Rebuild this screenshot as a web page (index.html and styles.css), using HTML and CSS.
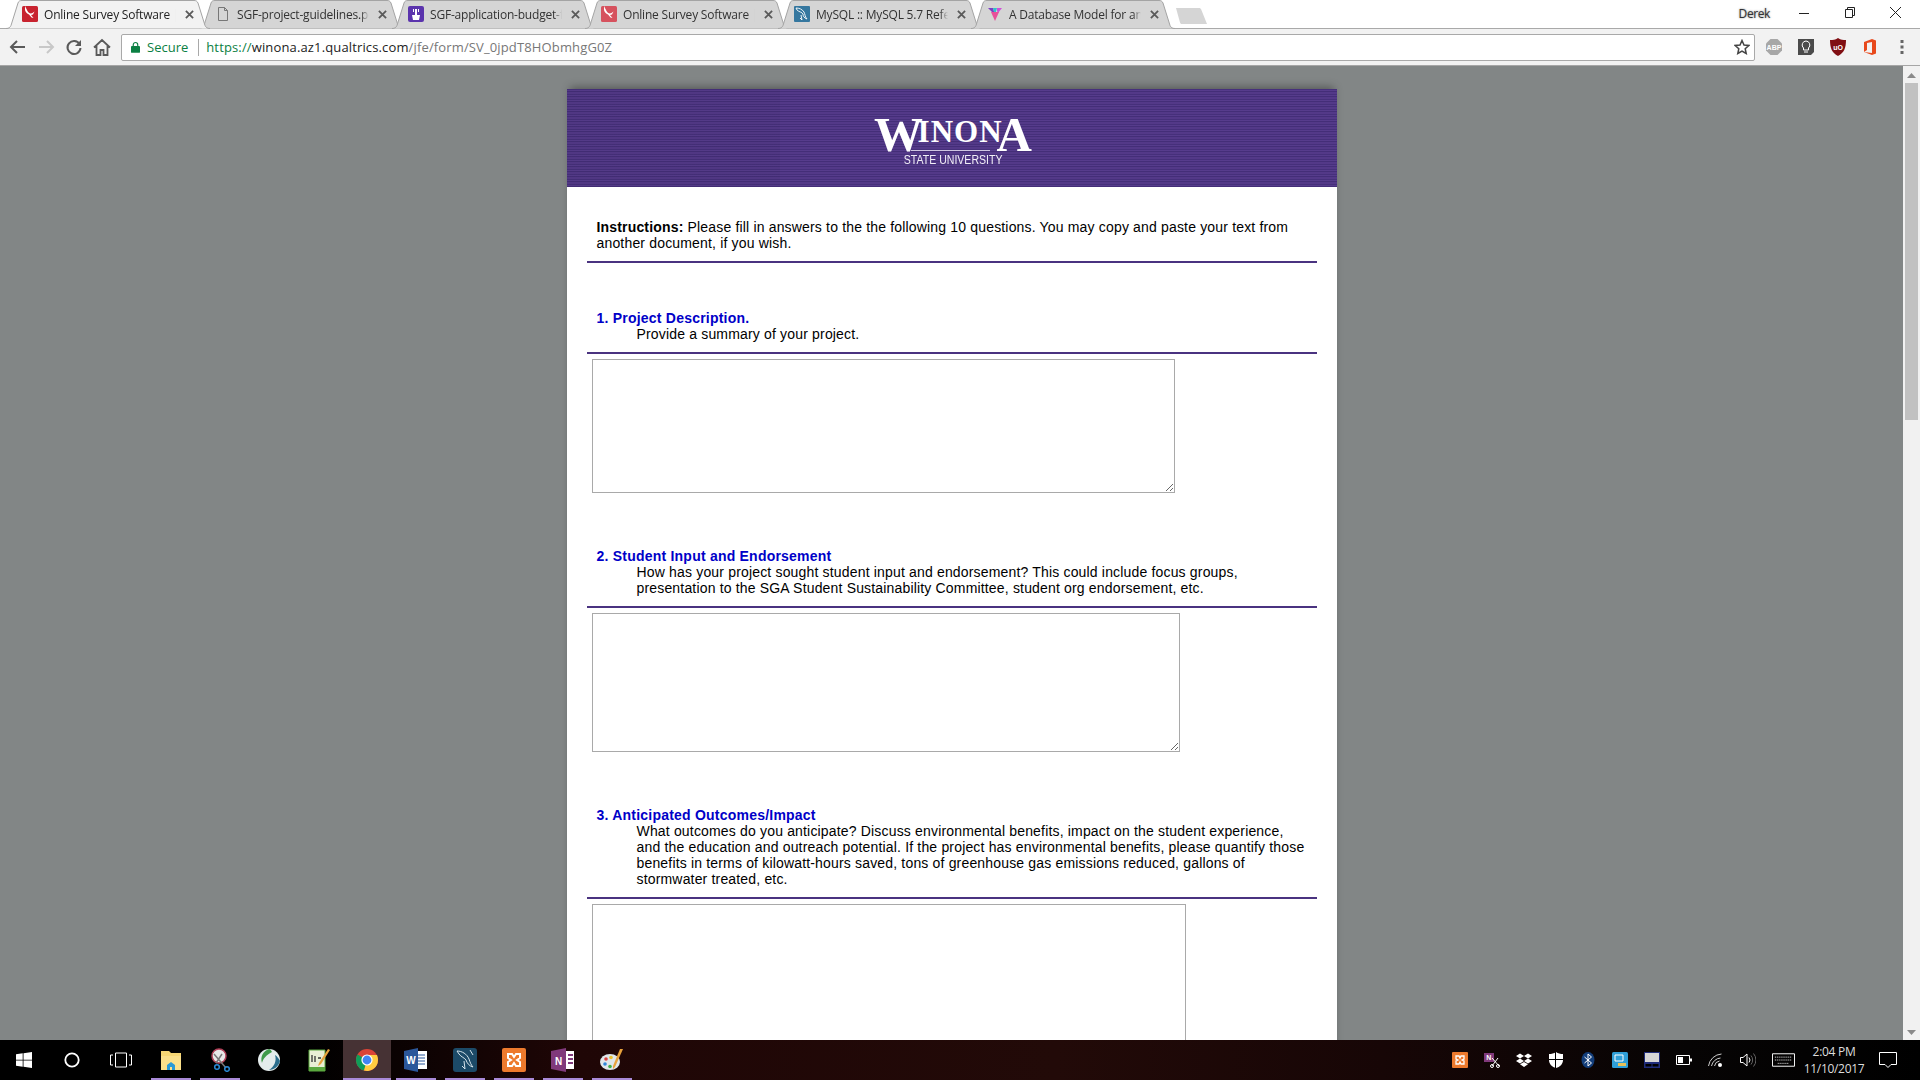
FILE: index.html
```html
<!DOCTYPE html>
<html lang="en">
<head>
<meta charset="utf-8">
<title>Online Survey Software</title>
<link rel="stylesheet" href="styles.css">
</head>
<body>
<div class="app">
  <header class="tabstrip">
    <div class="tabs">
      <div class="tab tab-active">
        <svg class="tab-shape" viewBox="0 0 204 28" preserveAspectRatio="none"><path d="M0 28C3 28 4 27 5 25L12 3C12.6 1 14 .5 16 .5L188 .5C190 .5 191 1 192 3L199 25C200 27 201 28 204 28"/></svg>
        <svg class="fav" viewBox="0 0 16 16"><rect width="16" height="16" rx="1.5" fill="#c8232f"/><path d="M3 0l2.500 5c1 2 3 3 5 2l2-1.500-1.500 3-2 .5 2.500 3-2-.5-2.500-3C5 8 3.500 6 3 4z" fill="#fff"/></svg>
        <span class="tab-title">Online Survey Software |</span>
        <svg class="tab-x" viewBox="0 0 10 10"><path d="M1 1l8 8M9 1l-8 8"/></svg>
      </div>
      <div class="tab">
        <svg class="tab-shape" viewBox="0 0 204 28" preserveAspectRatio="none"><path d="M0 28C3 28 4 27 5 25L12 3C12.6 1 14 .5 16 .5L188 .5C190 .5 191 1 192 3L199 25C200 27 201 28 204 28"/></svg>
        <svg class="fav" viewBox="0 0 16 16"><path d="M3.500 1.500h6l3 3v10h-9zM9.500 1.500v3h3" fill="none" stroke="#777"/></svg>
        <span class="tab-title">SGF-project-guidelines.pdf</span>
        <svg class="tab-x" viewBox="0 0 10 10"><path d="M1 1l8 8M9 1l-8 8"/></svg>
      </div>
      <div class="tab">
        <svg class="tab-shape" viewBox="0 0 204 28" preserveAspectRatio="none"><path d="M0 28C3 28 4 27 5 25L12 3C12.6 1 14 .5 16 .5L188 .5C190 .5 191 1 192 3L199 25C200 27 201 28 204 28"/></svg>
        <svg class="fav" viewBox="0 0 16 16"><rect width="16" height="16" rx="2" fill="#5b34ad"/><path d="M4 9h8l-1 5H5zM7 3h2v6H7zM5 3h1v3H5zM10 3h1v3h-1z" fill="#fff"/></svg>
        <span class="tab-title">SGF-application-budget-form</span>
        <svg class="tab-x" viewBox="0 0 10 10"><path d="M1 1l8 8M9 1l-8 8"/></svg>
      </div>
      <div class="tab">
        <svg class="tab-shape" viewBox="0 0 204 28" preserveAspectRatio="none"><path d="M0 28C3 28 4 27 5 25L12 3C12.6 1 14 .5 16 .5L188 .5C190 .5 191 1 192 3L199 25C200 27 201 28 204 28"/></svg>
        <svg class="fav" viewBox="0 0 16 16"><rect width="16" height="16" rx="1.5" fill="#d6525e"/><path d="M3 0l2.500 5c1 2 3 3 5 2l2-1.500-1.500 3-2 .5 2.500 3-2-.5-2.500-3C5 8 3.500 6 3 4z" fill="#fff"/></svg>
        <span class="tab-title">Online Survey Software |</span>
        <svg class="tab-x" viewBox="0 0 10 10"><path d="M1 1l8 8M9 1l-8 8"/></svg>
      </div>
      <div class="tab">
        <svg class="tab-shape" viewBox="0 0 204 28" preserveAspectRatio="none"><path d="M0 28C3 28 4 27 5 25L12 3C12.6 1 14 .5 16 .5L188 .5C190 .5 191 1 192 3L199 25C200 27 201 28 204 28"/></svg>
        <svg class="fav" viewBox="0 0 16 16"><rect width="16" height="16" rx="1" fill="#35779f"/><path d="M2 2c3 0 6 1 8 4 1 2 1 5 3 7-3-1-4-3-4-5C8 6 5 6 3 4zM7 9l1 5-2-2" fill="none" stroke="#fff" stroke-width=".9"/></svg>
        <span class="tab-title">MySQL :: MySQL 5.7 Reference</span>
        <svg class="tab-x" viewBox="0 0 10 10"><path d="M1 1l8 8M9 1l-8 8"/></svg>
      </div>
      <div class="tab">
        <svg class="tab-shape" viewBox="0 0 204 28" preserveAspectRatio="none"><path d="M0 28C3 28 4 27 5 25L12 3C12.6 1 14 .5 16 .5L188 .5C190 .5 191 1 192 3L199 25C200 27 201 28 204 28"/></svg>
        <svg class="fav" viewBox="0 0 16 16"><path d="M1 2h5l2 7z" fill="#7a3fc4"/><path d="M6 2h4L8 9z" fill="#2fc2c8"/><path d="M10 2h5l-4 5-1-2z" fill="#d04fd8"/><path d="M4 6h8l-4 9z" fill="#e84f9a"/></svg>
        <span class="tab-title">A Database Model for an Online</span>
        <svg class="tab-x" viewBox="0 0 10 10"><path d="M1 1l8 8M9 1l-8 8"/></svg>
      </div>
      <svg class="newtab" viewBox="0 0 33 18"><path d="M1 1h23c1 0 1.500 .5 2 1l6 15H7c-1 0-1.500-.5-2-1.500z"/></svg>
    </div>
    <div class="winctl">
      <span class="user">Derek</span>
      <svg class="win-btn" viewBox="0 0 46 14"><path d="M18 7.500h10" stroke="#222" fill="none"/></svg>
      <svg class="win-btn" viewBox="0 0 46 14"><path d="M18.500 3.500h7v8h-7zM20.500 3.500v-2h7v8h-2" stroke="#222" fill="none"/></svg>
      <svg class="win-btn" viewBox="0 0 46 14"><path d="M17 1l11 11M28 1L17 12" stroke="#222" fill="none"/></svg>
    </div>
  </header>

  <nav class="toolbar">
    <svg class="nav-btn" viewBox="0 0 28 20"><path d="M21 10H8M13 4l-6 6 6 6" class="ic-dark"/></svg>
    <svg class="nav-btn" viewBox="0 0 28 20"><path d="M7 10h13M15 4l6 6-6 6" class="ic-light"/></svg>
    <svg class="nav-btn" viewBox="0 0 28 20"><path d="M19.500 7A6.500 6.500 0 1 0 20.500 11" class="ic-dark"/><path d="M21 3v6h-6z" fill="#5a5a5a"/></svg>
    <svg class="nav-btn" viewBox="0 0 28 20"><path d="M6 10.500L14 3l8 7.500M8.500 9v9h4v-5h3v5h4V9" class="ic-home"/></svg>
    <div class="omnibox">
      <svg class="lock" viewBox="0 0 10 13"><path d="M2.500 6V4a2.500 2.500 0 0 1 5 0v2" fill="none" stroke="#0b8043" stroke-width="1.300"/><rect y="5.500" width="10" height="7.500" rx="1" fill="#0b8043"/></svg>
      <span class="secure">Secure</span>
      <span class="omni-sep"></span>
      <span class="url"><span class="url-scheme">https://</span><span class="url-host">winona.az1.qualtrics.com</span><span class="url-path">/jfe/form/SV_0jpdT8HObmhgG0Z</span></span>
      <svg class="star" viewBox="0 0 16 16"><path d="M8 1.500l2 4.500 4.800.5-3.600 3.200 1 4.800L8 12l-4.200 2.500 1-4.800L1.200 6.500 6 6z" fill="none" stroke="#444" stroke-width="1.500"/></svg>
    </div>
    <div class="ext-row">
      <span class="ext"><svg class="ext-ic" viewBox="0 0 18 18"><path d="M5.500 1h7L17 5.500v7L12.500 17h-7L1 12.500v-7z" fill="#a7a7a7"/><text x="9" y="12" class="abp">ABP</text></svg></span>
      <span class="ext"><svg class="ext-ic" viewBox="0 0 18 18"><path d="M1 1h16v13l-3 3H1z" fill="#4b4b4b"/><path d="M9 3a4 4 0 0 0-2.500 7v2h5v-2A4 4 0 0 0 9 3zM7 14h4" fill="none" stroke="#fff"/></svg></span>
      <span class="ext"><svg class="ext-ic" viewBox="0 0 18 18"><path d="M9 0c3 2 5 2 8 2 0 8-2 13-8 16C3 15 1 10 1 2c3 0 5 0 8-2z" fill="#800f13"/><text x="9" y="11.500" class="ubo">uO</text></svg></span>
      <span class="ext"><svg class="ext-ic" viewBox="0 0 18 18"><path d="M3 4l8-3 4 1.500v13L11 17l-8-3 8 1V4l-5 1v7l-3 2z" fill="#e8491c"/></svg></span>
      <span class="ext"><svg class="ext-ic" viewBox="0 0 18 18"><path d="M7.500 2h3v3h-3zM7.500 7.500h3v3h-3zM7.500 13h3v3h-3z" fill="#666"/></svg></span>
    </div>
  </nav>

  <div class="content">
    <main class="viewport">
      <article class="survey">
        <div class="banner">
          <div class="logo">
            <div class="wordmark"><span class="wm-big wm-w">W</span><span class="wm-small">INON</span><span class="wm-big wm-a">A</span><span class="wm-line"></span></div>
            <div class="logo-sub">STATE UNIVERSITY</div>
          </div>
        </div>
        <div class="body">
          <section class="note">
            <p class="text"><strong>Instructions:</strong> Please fill in answers to the the following 10 questions. You may copy and paste your text from another document, if you wish.</p>
          </section>
          <section class="question q1">
            <div class="q-head">
              <h2 class="q-title">1. Project Description.</h2>
              <p class="q-desc">Provide a summary of your project.</p>
            </div>
            <textarea class="answer a1"></textarea>
          </section>
          <section class="question q2">
            <div class="q-head">
              <h2 class="q-title">2. Student Input and Endorsement</h2>
              <p class="q-desc">How has your project sought student input and endorsement? This could include focus groups, presentation to the SGA Student Sustainability Committee, student org endorsement, etc.</p>
            </div>
            <textarea class="answer a2"></textarea>
          </section>
          <section class="question q3">
            <div class="q-head">
              <h2 class="q-title">3. Anticipated Outcomes/Impact</h2>
              <p class="q-desc">What outcomes do you anticipate? Discuss environmental benefits, impact on the student experience, and the education and outreach potential. If the project has environmental benefits, please quantify those benefits in terms of kilowatt-hours saved, tons of greenhouse gas emissions reduced, gallons of stormwater treated, etc.</p>
            </div>
            <textarea class="answer a3"></textarea>
          </section>
        </div>
      </article>
    </main>
    <aside class="scrollbar">
      <svg class="sb-arrow" viewBox="0 0 9 5"><path d="M4.500 0L9 5H0z"/></svg>
      <div class="sb-thumb"></div>
      <div class="sb-rest"></div>
      <svg class="sb-arrow" viewBox="0 0 9 5"><path d="M0 0h9L4.500 5z"/></svg>
    </aside>
  </div>

  <footer class="taskbar">
    <div class="tb-left">
      <span class="sys"><svg class="sys-ic" viewBox="0 0 16 16"><path d="M0 2.300l6.700-1v6.400H0zM7.500 1.200L16 0v7.700H7.500zM0 8.500h6.700v6.300L0 13.800zM7.500 8.500H16V16l-8.500-1.200z" fill="#fff"/></svg></span>
      <span class="sys"><svg class="sys-ic" viewBox="0 0 16 16"><circle cx="8" cy="8" r="6.700" fill="none" stroke="#fff" stroke-width="1.800"/></svg></span>
      <span class="sys sys-view"><svg class="sys-ic-w" viewBox="0 0 22 16"><path d="M5.500 1h11v14h-11zM3 3H.500v10H3M19 3h2.500v10H19" fill="none" stroke="#fff"/></svg></span>
      <span class="app-slot on"><svg class="app-ic" viewBox="0 0 24 24"><path d="M2 3h8l2 2h10v17H2z" fill="#f7d774"/><path d="M2 8h20v14H2z" fill="#fbe08a"/><path d="M8 22v-5l4-3 4 3v5h-3v-3h-2v3z" fill="#2a9ad6"/></svg></span>
      <span class="app-slot on"><svg class="app-ic" viewBox="0 0 24 24"><circle cx="11" cy="8" r="7" fill="#e8e8e8" stroke="#b04058" stroke-width="1.500"/><path d="M6 6l12 14M14 6L8 15" stroke="#777" stroke-width="1.500"/><circle cx="19" cy="21" r="2.300" fill="none" stroke="#2a8ad6" stroke-width="1.500"/><circle cx="9" cy="19" r="2.300" fill="none" stroke="#2a8ad6" stroke-width="1.500"/></svg></span>
      <span class="app-slot"><svg class="app-ic" viewBox="0 0 24 24"><circle cx="12" cy="12" r="11" fill="#e4ecec"/><path d="M12 1C6 3 3 9 5 15c1-4 4-8 10-11-1-2-2-3-3-3z" fill="#3f9a4a"/><path d="M18 7c2 6-1 12-6 15 5 0 10-4 11-9-1-2-3-5-5-6z" fill="#2a6d8c"/></svg></span>
      <span class="app-slot"><svg class="app-ic" viewBox="0 0 24 24"><path d="M3 2h16v21H3z" fill="#e9efd5" stroke="#5aa83e"/><path d="M3 19h16v4H3z" fill="#5aa83e"/><path d="M6 7v7M9 8v6M12 10h3" stroke="#333" stroke-width="1.300"/><path d="M22 1l2 1-9 14-3 2 1-3z" fill="#e6a23c"/></svg></span>
      <span class="app-slot on current"><svg class="app-ic" viewBox="0 0 24 24"><circle cx="12" cy="12" r="11" fill="#db4437"/><path d="M12 12L2.500 6.500A11 11 0 0 0 9 22.600z" fill="#0f9d58"/><path d="M12 12l-3 10.600A11 11 0 0 0 23 12c0-2-.5-3.500-1-5H12z" fill="#ffcd40"/><circle cx="12" cy="12" r="5.600" fill="#fff"/><circle cx="12" cy="12" r="4.400" fill="#4285f4"/></svg></span>
      <span class="app-slot on"><svg class="app-ic" viewBox="0 0 24 24"><path d="M9 3h14v18H9z" fill="#fff"/><path d="M12 7h9M12 10h9M12 13h9M12 16h9" stroke="#2b579a"/><path d="M0 3l14-3v24L0 21z" fill="#2b579a"/><text x="7" y="16" class="ic-letter">W</text></svg></span>
      <span class="app-slot on"><svg class="app-ic" viewBox="0 0 24 24"><rect width="24" height="24" rx="3" fill="#1c4a68"/><path d="M4 3c5 0 10 3 12 8 1 3 2 6 4 8-4-1-6-4-7-7-1-2-5-3-7-6zM11 13l1 8-3-3M17 2l3 5" fill="none" stroke="#d6e4ec"/></svg></span>
      <span class="app-slot on"><svg class="app-ic" viewBox="0 0 24 24"><rect width="24" height="24" rx="2" fill="#ed7a2d"/><path d="M6 6h4l2 3 2-3h4v4l-3 2 3 2v4h-4l-2-3-2 3H6v-4l3-2-3-2z" fill="none" stroke="#fff" stroke-width="2"/></svg></span>
      <span class="app-slot on"><svg class="app-ic" viewBox="0 0 24 24"><path d="M10 3h13v18H10z" fill="#fff"/><path d="M17 7h5M17 11h5M17 15h5" stroke="#80397b" stroke-width="2"/><path d="M0 3l15-3v24L0 21z" fill="#80397b"/><text x="7.500" y="16.500" class="ic-letter">N</text></svg></span>
      <span class="app-slot on"><svg class="app-ic" viewBox="0 0 24 24"><ellipse cx="10" cy="14" rx="10" ry="8" fill="#dfe6ea"/><circle cx="6" cy="11" r="1.800" fill="#d94040"/><circle cx="11" cy="9.500" r="1.800" fill="#e8c02f"/><circle cx="5" cy="16" r="1.800" fill="#2f86d9"/><circle cx="10" cy="18.500" r="1.800" fill="#3fae4a"/><path d="M23 1l-8 18-2 2 0-3 7-17z" fill="#e8a23c"/></svg></span>
    </div>
    <div class="tb-right">
      <span class="tray"><svg class="tray-ic" viewBox="0 0 16 16"><rect width="16" height="16" rx="1" fill="#ed7a2d"/><path d="M4 4h3l1 2 1-2h3v3l-2 1 2 1v3H9L8 10l-1 2H4V9l2-1-2-1z" fill="none" stroke="#fff" stroke-width="1.300"/></svg></span>
      <span class="tray"><svg class="tray-ic" viewBox="0 0 16 16"><path d="M0 1h10v9H0z" fill="#80397b"/><text x="4.800" y="8.300" class="tray-letter">N</text><path d="M8 6l7 8M14 6l-6 8" stroke="#fff"/><circle cx="8" cy="14" r="1.500" fill="none" stroke="#fff"/><circle cx="14" cy="14" r="1.500" fill="none" stroke="#fff"/></svg></span>
      <span class="tray"><svg class="tray-ic" viewBox="0 0 16 16"><path d="M4 1.500L8 4 4 6.500 0 4zM12 1.500L16 4l-4 2.500L8 4zM4 6.500L8 9l-4 2.500L0 9zM12 6.500L16 9l-4 2.500L8 9zM4 12.300L8 10l4 2.300L8 15z" fill="#fff"/></svg></span>
      <span class="tray"><svg class="tray-ic" viewBox="0 0 16 16"><path d="M8 0c2 1.500 4.500 2 7 2v6c0 4-3 7-7 8-4-1-7-4-7-8V2c2.500 0 5-.5 7-2z" fill="#fff"/><path d="M7.500 0v16M1 7.500h14" stroke="#000"/></svg></span>
      <span class="tray"><svg class="tray-ic" viewBox="0 0 16 16"><ellipse cx="8" cy="8" rx="6.500" ry="8" fill="#123d7a"/><path d="M4.500 5l7 6L8 14V2l3.500 3-7 6" fill="none" stroke="#fff"/></svg></span>
      <span class="tray"><svg class="tray-ic" viewBox="0 0 16 16"><rect width="16" height="16" rx="1.500" fill="#2f9fd8"/><path d="M3 3h8v6H3z" fill="none" stroke="#fff"/><path d="M6 11h8v3H6z" fill="#e8c25a"/></svg></span>
      <span class="tray"><svg class="tray-ic" viewBox="0 0 16 16"><path d="M0 0h16v16H0z" fill="#1f2c7a"/><path d="M1 1h14v9H1z" fill="#d6d6d6"/><path d="M1.500 12h6v2.500h-6zM8.500 12h6v2.500h-6z" fill="#000"/></svg></span>
      <span class="tray"><svg class="tray-ic" viewBox="0 0 16 16"><path d="M.500 3.500h13v9H.500z" fill="none" stroke="#fff"/><path d="M2 5h5v6H2z" fill="#fff"/><path d="M14 6.500h2v3h-2z" fill="#fff"/></svg></span>
      <span class="tray"><svg class="tray-ic" viewBox="0 0 16 16"><path d="M.500 14a14 14 0 0 1 13-12M3.500 14a10 10 0 0 1 9-8M6.500 14a6 6 0 0 1 5-5" fill="none" stroke="#ccc"/><circle cx="12" cy="13" r="2" fill="#fff"/></svg></span>
      <span class="tray"><svg class="tray-ic" viewBox="0 0 16 16"><path d="M.500 5.500H3L7 2v12L3 10.500H.500z" fill="none" stroke="#fff"/><path d="M9 5.500a4 4 0 0 1 0 5" fill="none" stroke="#fff"/><path d="M11 3.500a7 7 0 0 1 0 9M13.500 1.500a10 10 0 0 1 0 13" fill="none" stroke="#666"/></svg></span>
      <span class="tray tray-kbd"><svg class="kbd-ic" viewBox="0 0 24 14"><path d="M.500 .500h23v13H.500z" fill="none" stroke="#fff"/><path d="M3 4h18M3 7h18M6 10.500h12" stroke="#fff" stroke-dasharray="1 1"/></svg></span>
      <div class="clock"><span>2:04 PM</span><span>11/10/2017</span></div>
      <span class="tray tray-note"><svg class="note-ic" viewBox="0 0 18 16"><path d="M.500 .500h17v12H12l-3 3-3-3H.500z" fill="none" stroke="#fff"/></svg></span>
    </div>
  </footer>
</div>
</body>
</html>
```
FILE: styles.css
```css
* { box-sizing: border-box; }
html, body { margin: 0; height: 100%; overflow: hidden; }
body { font-family: "Liberation Sans", Arial, sans-serif; background: #828686; }
svg { display: block; flex: none; }

.app { display: flex; flex-direction: column; height: 100vh; }

/* title bar and tabs */
.tabstrip { height: 29px; flex: none; display: flex; justify-content: space-between; background: #fff; border-bottom: 1px solid #a9a9a9; }
.tabs { display: flex; align-items: flex-start; padding-left: 6px; }
.tab { position: relative; width: 204px; height: 28px; margin-right: -11px; padding-left: 16px; display: flex; align-items: center; }
.tab-shape { position: absolute; inset: 0; width: 100%; height: 28.5px; }
.tab-shape path { fill: #d5d5d5; stroke: #a4a4a4; stroke-width: 1; vector-effect: non-scaling-stroke; }
.tab-active { z-index: 2; }
.tab-active .tab-shape path { fill: #f2f2f2; }
.fav { position: relative; width: 16px; height: 16px; }
.tab-title { position: relative; width: 132px; margin-left: 6px; font: 12px "Open Sans", sans-serif; letter-spacing: -.2px; color: #333; white-space: nowrap; overflow: hidden; -webkit-mask-image: linear-gradient(90deg, #000 94%, transparent); mask-image: linear-gradient(90deg, #000 94%, transparent); }
.tab-active .tab-title { color: #222; }
.tab-x { position: relative; width: 9px; height: 9px; margin-left: 8.500px; }
.tab-x path { stroke: #5a5a5a; stroke-width: 2; fill: none; }
.newtab { margin: 7px 0 0 11px; width: 33px; height: 18px; }
.newtab path { fill: #d5d5d5; }
.winctl { display: flex; align-items: center; height: 26px; padding-right: 1px; }
.user { margin-right: 11px; font: 12px "Open Sans", sans-serif; letter-spacing: -.4px; color: #333; text-shadow: 0 0 2px #777; }
.win-btn { width: 46px; height: 14px; }

/* toolbar */
.toolbar { height: 37px; flex: none; display: flex; align-items: center; padding-left: 4px; background: #f2f2f2; border-bottom: 1px solid #a6a6a6; }
.nav-btn { width: 28px; height: 20px; }
.ic-dark { fill: none; stroke: #5a5a5a; stroke-width: 2; }
.ic-light { fill: none; stroke: #c8c8c8; stroke-width: 2; }
.ic-home { fill: none; stroke: #5a5a5a; stroke-width: 1.800; }
.omnibox { width: 1634px; height: 27px; margin-left: 5px; padding: 0 4px 0 9px; display: flex; align-items: center; background: #fff; border: 1px solid #a9a9a9; border-radius: 2px; font: 13px "Open Sans", sans-serif; }
.lock { width: 9px; height: 12px; }
.secure { margin-left: 7px; color: #0b8043; }
.omni-sep { width: 1px; height: 17px; margin: 0 7px 0 10px; background: #a9a9a9; }
.url { flex: 1; white-space: nowrap; letter-spacing: .14px; }
.url-scheme { color: #0b8043; }
.url-host { color: #222; }
.url-path { color: #777; }
.star { width: 16px; height: 16px; }
.ext-row { display: flex; margin-left: 3px; }
.ext { width: 32px; display: flex; justify-content: center; }
.ext-ic { width: 18px; height: 18px; }
.abp { font: 700 7px "Liberation Sans", sans-serif; fill: #fff; text-anchor: middle; }
.ubo { font: 700 7px "Liberation Sans", sans-serif; fill: #fff; text-anchor: middle; }

/* page */
.content { flex: 1; min-height: 0; display: flex; }
.viewport { flex: 1; min-width: 0; overflow: hidden; padding-top: 23px; }
.survey { width: 770px; margin: 0 auto; padding-bottom: 40px; background: #fff; box-shadow: 0 -5px 8px -3px rgba(0, 0, 0, .35); }
.banner { height: 98px; display: flex; justify-content: center; padding: 28px 0 0 3px; background-color: #4f3684; background-image: linear-gradient(90deg, rgba(0, 0, 0, .04) 0, rgba(0, 0, 0, .04) 213px, transparent 213px), repeating-linear-gradient(180deg, #46307b 0 1px, #563c8c 1px 2px, #442e78 2px 3px, #533988 3px 5px); }
.logo { width: 158px; display: flex; flex-direction: column; align-items: center; color: #fff; }
.wordmark { position: relative; height: 35px; display: flex; align-items: flex-start; font-family: "Liberation Serif", serif; font-weight: 700; line-height: 1; }
.wm-big { font-size: 49px; line-height: 36px; }
.wm-w { margin-right: -5.500px; }
.wm-small { font-size: 31px; line-height: 30px; letter-spacing: 1px; margin-right: -3px; }
.wm-a { margin-left: -3px; }
.wm-line { position: absolute; left: 37px; bottom: 1px; width: 79px; height: 1px; background: #cfc6e2; }
.logo-sub { margin-top: 2px; font-size: 12px; line-height: 12px; color: #f2eff8; transform: scaleX(.88); white-space: nowrap; }

.body { padding: 0 20px; }
.text, .q-desc { margin: 0; font-size: 14px; line-height: 16px; letter-spacing: .17px; color: #000; }
.note { padding: 32px 7px 10px 10px; border-bottom: 2px solid #4a3380; }
.question { padding-top: 55px; }
.q1 { padding-top: 47px; }
.q-head { padding: 0 7px 10px 10px; border-bottom: 2px solid #4a3380; }
.q-title { margin: 0; font-size: 14px; line-height: 16px; font-weight: 700; letter-spacing: .22px; color: #0000c8; }
.q-desc { padding-left: 40px; }
.answer { display: block; margin: 5px 0 0 5.500px; padding: 2px; background: #fff; border: 1px solid #a9a9a9; border-radius: 0; outline: none; }
.a1 { width: 583px; height: 134px; }
.a2 { width: 588px; height: 139px; }
.a3 { width: 594px; height: 200px; }

/* scrollbar */
.scrollbar { width: 17px; flex: none; display: flex; flex-direction: column; align-items: center; background: #f1f1f1; padding: 7px 0 5px; }
.sb-arrow { width: 9px; height: 5px; fill: #8a8a8a; }
.sb-thumb { width: 13px; height: 337px; margin-top: 5px; background: #c1c1c1; }
.sb-rest { flex: 1; }

/* taskbar */
.taskbar { height: 40px; flex: none; display: flex; justify-content: space-between; background: linear-gradient(90deg, #000 0, #000 16%, #1f0606 30%, #220a08 55%, #170606 72%, #060404 88%, #000 100%); }
.tb-left { display: flex; }
.sys { width: 48px; display: flex; align-items: center; justify-content: center; }
.sys-view { width: 50px; }
.sys-ic { width: 16px; height: 16px; }
.sys-ic-w { width: 22px; height: 16px; }
.app-slot { position: relative; width: 49px; display: flex; align-items: center; justify-content: center; }
.app-slot.on::after { content: ""; position: absolute; left: 4.500px; right: 4.500px; bottom: 0; height: 2px; background: #a98ad8; }
.app-slot.current { background: #463234; margin: 0 .500px; width: 48px; }
.app-slot.current::after { left: 0; right: 0; }
.app-ic { width: 24px; height: 24px; }
.ic-letter { font: 700 10px "Liberation Sans", sans-serif; fill: #fff; text-anchor: middle; }
.tray-letter { font: 700 7px "Liberation Sans", sans-serif; fill: #fff; text-anchor: middle; }
.tb-right { display: flex; align-items: center; }
.tray { width: 32px; display: flex; justify-content: center; }
.tray-ic { width: 16px; height: 16px; }
.tray-kbd { width: 38px; }
.kbd-ic { width: 23px; height: 14px; }
.clock { width: 60px; margin-left: 2px; display: flex; flex-direction: column; align-items: center; font: 12px/17px "Open Sans", sans-serif; letter-spacing: -.3px; color: #ddd; white-space: nowrap; }
.tray-note { width: 33px; margin-right: 16px; margin-left: 7px; }
.note-ic { width: 18px; height: 16px; }
```
